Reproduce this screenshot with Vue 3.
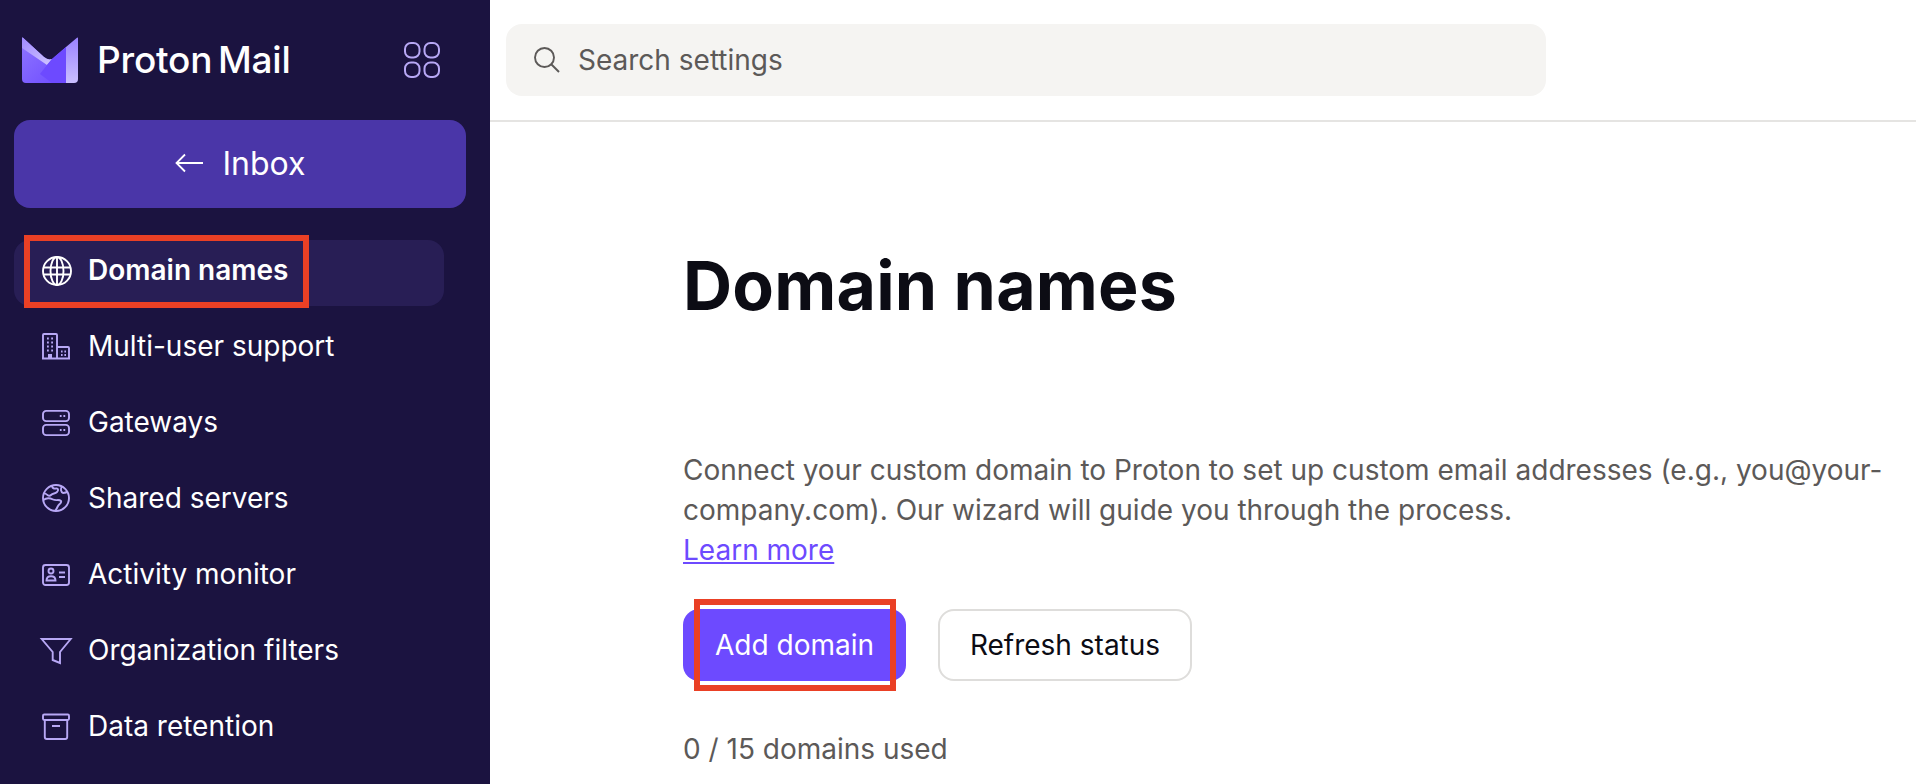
<script setup>
const items = [
  { label: 'Domain names', icon: 'globe', active: true },
  { label: 'Multi-user support', icon: 'building' },
  { label: 'Gateways', icon: 'servers' },
  { label: 'Shared servers', icon: 'earth' },
  { label: 'Activity monitor', icon: 'card' },
  { label: 'Organization filters', icon: 'filter' },
  { label: 'Data retention', icon: 'archive' },
]
</script>

<template>
  <div class="page">
    <aside class="sidebar">
      <div class="brand">
        <svg class="logo" viewBox="0 0 56 46" width="56" height="46">
          <defs>
            <linearGradient id="lg1" x1="0" y1="0" x2="1" y2="1">
              <stop offset="0" stop-color="#a08aff" /><stop offset="1" stop-color="#d0c5ff" />
            </linearGradient>
            <linearGradient id="lg2" x1="0" y1="0" x2="1" y2="1">
              <stop offset="0" stop-color="#8f76ff" /><stop offset="1" stop-color="#6d4aff" />
            </linearGradient>
            <linearGradient id="lg3" x1="0" y1="0" x2="0" y2="1">
              <stop offset="0" stop-color="#9a82ff" /><stop offset="1" stop-color="#cabfff" />
            </linearGradient>
          </defs>
          <path d="M0 1 Q0 0 1 .8 L22 20 Q26 23.5 30 22 L44 10 V46 H4 Q0 46 0 42Z" fill="url(#lg2)" />
          <path d="M0 1 Q0 0 1 .8 L22 20 Q26 23.5 30 22 L25 28 L0 11Z" fill="url(#lg1)" />
          <path d="M25 28 L30 22 L44 10 V46 H30 L18 37Z" fill="#6d4aff" />
          <path d="M44 10 L55 .8 Q56 0 56 1 V42 Q56 46 52 46 H44Z" fill="url(#lg3)" />
        </svg>
        <span class="wordmark">Proton Mail</span>
        <svg class="apps" viewBox="0 0 36 36" width="36" height="36" fill="none" stroke="#b8a8f5" stroke-width="2">
          <rect x="1" y="1" width="14.5" height="14.5" rx="6" />
          <rect x="20.5" y="1" width="14.5" height="14.5" rx="6" />
          <rect x="1" y="20.5" width="14.5" height="14.5" rx="6" />
          <rect x="20.5" y="20.5" width="14.5" height="14.5" rx="6" />
        </svg>
      </div>
      <button class="inbox">
        <svg viewBox="0 0 28 20" width="28" height="20" fill="none" stroke="#fff" stroke-width="1.8">
          <path d="M28 10H1.5M10 1.5L1.5 10L10 18.5" />
        </svg>
        <span>Inbox</span>
      </button>
      <nav class="nav">
        <a v-for="item in items" :key="item.label" class="item" :class="{ active: item.active }">
          <svg class="ico" viewBox="0 0 28 28" width="28" height="28" fill="none" stroke="currentColor" stroke-width="1.9">
            <template v-if="item.icon === 'globe'">
              <circle cx="15" cy="15" r="14" />
              <ellipse cx="15" cy="15" rx="6.5" ry="14" />
              <path d="M15 1V29M1.8 11.5H28.2M1.8 18.5H28.2" />
            </template>
            <template v-else-if="item.icon === 'building'">
              <path d="M1 27V3Q1 2 2 2H14Q15 2 15 3V27M15 15H26Q27 15 27 16V27M0 26.5H28" />
              <path d="M5 6.5H6.8M9.2 6.5H11M5 10.5H6.8M9.2 10.5H11M5 14.5H6.8M9.2 14.5H11M5 18.5H6.8M9.2 18.5H11M19 19.5H20.6M22.4 19.5H24M19 23H20.6M22.4 23H24" />
              <rect x="6" y="22" width="4" height="4.5" fill="currentColor" stroke="none" />
            </template>
            <template v-else-if="item.icon === 'servers'">
              <rect x="1" y="2.9" width="26" height="10.2" rx="3.2" />
              <rect x="1" y="16.9" width="26" height="10.2" rx="3.2" />
              <path d="M17.8 8H19.6M21.4 8H23.2M17.8 22H19.6M21.4 22H23.2" />
            </template>
            <template v-else-if="item.icon === 'earth'">
              <circle cx="14" cy="14" r="13" />
              <path d="M10 1.5C10 4 12 5 14 4.5C16 4 17 6 15 8C13 10 11 9 9 11C7 13 6 11 4 10L1.8 9" />
              <path d="M1.4 16C4 14 8 14 11 15.5C14 17 17 15 19 17C20 19 17 20 16 22C15 24 14 26 13 27" />
              <path d="M20 2.5C18 5 19 8 21 9C23 9 25 8 25.5 7" />
            </template>
            <template v-else-if="item.icon === 'card'">
              <rect x="1" y="5" width="26" height="20" rx="2.5" />
              <circle cx="9" cy="11" r="2.5" />
              <path d="M4.5 20.5Q4.5 16.2 9 16.2Q13.5 16.2 13.5 20.5ZM17 12.5H23M17 17H23" />
            </template>
            <template v-else-if="item.icon === 'filter'">
              <path d="M-0.3 3H28.7L18 16V27L10.7 24V16Z" />
            </template>
            <template v-else>
              <rect x="1" y="2.5" width="26" height="5.5" rx="1.2" />
              <path d="M2.8 8V25Q2.8 27 4.8 27H23.2Q25.2 27 25.2 25V8M10 14H18" />
            </template>
          </svg>
          <span class="label">{{ item.label }}</span>
        </a>
      </nav>
    </aside>
    <div class="main">
      <header class="top">
        <div class="search">
          <svg viewBox="0 0 28 28" width="28" height="28" fill="none" stroke="#5c5958" stroke-width="1.9">
            <circle cx="11.5" cy="11.5" r="9.5" />
            <path d="M18.5 18.5L26 26" />
          </svg>
          <span>Search settings</span>
        </div>
      </header>
      <section class="content">
        <h1>Domain names</h1>
        <p class="desc">
          Connect your custom domain to Proton to set up custom email addresses (e.g., you@your-company.com). Our wizard will guide you through the process.<br />
          <a class="link">Learn more</a>
        </p>
        <div class="actions">
          <button class="btn primary">Add domain</button>
          <button class="btn ghost">Refresh status</button>
        </div>
        <p class="used">0 / 15 domains used</p>
      </section>
    </div>
    <div class="mark mark-nav"></div>
    <div class="mark mark-add"></div>
  </div>
</template>

<style>
html, body { margin: 0; background: #fff; overflow: hidden; }
</style>

<style scoped>
.page {
  position: relative;
  display: flex;
  width: 1916px;
  height: 784px;
  overflow: hidden;
  font-family: Inter, "Liberation Sans", sans-serif;
}
.sidebar {
  width: 490px;
  flex: none;
  background: #1b1340;
  box-sizing: border-box;
  padding: 37px 24px 0 14px;
  color: #fff;
}
.brand {
  display: flex;
  align-items: center;
  height: 46px;
  padding-left: 8px;
}
.logo { flex: none; }
.wordmark {
  margin: 0 0 2px 19px;
  font-size: 37px;
  font-weight: 500;
  letter-spacing: -0.2px;
  word-spacing: -4px;
  white-space: nowrap;
}
.apps { margin-left: auto; margin-right: 26px; }
.inbox {
  display: flex;
  align-items: center;
  justify-content: center;
  gap: 19px;
  width: 452px;
  height: 88px;
  margin-top: 37px;
  padding: 0 0 2px 1px;
  border: 0;
  border-radius: 16px;
  background: #4a36a8;
  color: #fff;
  font: 400 32px Inter, sans-serif;
}
.nav {
  display: flex;
  flex-direction: column;
  gap: 10px;
  margin-top: 32px;
  width: 430px;
}
.item {
  display: flex;
  align-items: center;
  gap: 18px;
  height: 66px;
  padding: 0 0 6px 28px;
  font-size: 28px;
  color: #fff;
  border-radius: 16px;
  box-sizing: border-box;
}
.item .ico { color: #b8a8f5; flex: none; overflow: visible; }
.item.active { background: #281e55; font-weight: 600; }
.item.active .ico { color: #fff; }
.main { flex: 1; min-width: 0; }
.top {
  height: 122px;
  box-sizing: border-box;
  border-bottom: 2px solid #e5e4e2;
  padding: 24px 0 0 16px;
}
.search {
  display: flex;
  align-items: center;
  gap: 17px;
  width: 1040px;
  height: 72px;
  box-sizing: border-box;
  padding-left: 27px;
  border-radius: 16px;
  background: #f5f4f2;
  color: #5c5958;
  font-size: 28px;
}
.content { padding: 123px 20px 0 193px; }
h1 {
  margin: 0;
  font-size: 68px;
  line-height: 80px;
  font-weight: 700;
  color: #0c0c14;
  letter-spacing: 0.2px;
}
.desc {
  margin: 125px 0 0;
  font-size: 28px;
  line-height: 40px;
  color: #5c5958;
}
.link { color: #6d4aff; text-decoration: underline; }
.actions { display: flex; gap: 32px; margin-top: 39px; }
.btn {
  height: 72px;
  border-radius: 16px;
  font: 400 28px Inter, sans-serif;
  padding: 0;
  box-sizing: border-box;
  white-space: nowrap;
}
.primary { background: #6d4aff; border: 0; color: #fff; width: 223px; }
.ghost { background: #fff; border: 2px solid #dedddb; color: #0c0c14; width: 254px; }
.used { margin: 48px 0 0; font-size: 28px; line-height: 40px; color: #5c5958; }
.mark { position: absolute; box-sizing: border-box; border: 6px solid #ea4025; }
.mark-nav { left: 24px; top: 235px; width: 285px; height: 73px; }
.mark-add { left: 694px; top: 599px; width: 202px; height: 92px; }
</style>
